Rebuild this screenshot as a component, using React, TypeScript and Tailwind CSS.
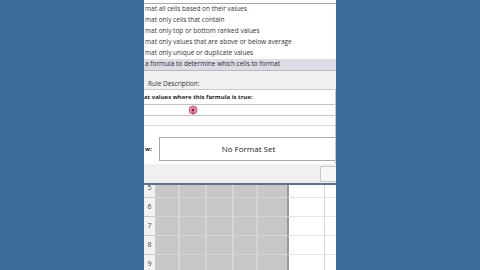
import React from "react";

// only the part of each line that shows inside the cropped dialog
const rules = [
  "mat all cells based on their values",
  "mat only cells that contain",
  "mat only top or bottom ranked values",
  "mat only values that are above or below average",
  "mat only unique or duplicate values",
];

const rows = ["5", "6", "7", "8", "9"];

export default function App() {
  return (
    <div className="flex h-[270px] w-[480px] overflow-hidden bg-[#3b6d9a] font-['Open_Sans',sans-serif]">
      <div className="w-[144px] shrink-0" />

      {/* Dialog + sheet */}
      <div className="flex w-[192px] shrink-0 flex-col overflow-hidden bg-[#f0f0f0]">
        {/* rule type list */}
        <div className="border-b border-[#b9b9b9] bg-white pt-[3px]">
          <div className="h-[1px] bg-[#a9a9a9]" />
          {rules.map((r) => (
            <div key={r} className="flex h-[11px] items-center whitespace-nowrap pl-[1px] text-[6.5px] leading-none text-[#333]">
              {r}
            </div>
          ))}
          <div className="flex h-[11px] items-center whitespace-nowrap bg-[#dddce6] pl-[1px] text-[6.5px] leading-none text-[#2a2a2a]">
            a formula to determine which cells to format
          </div>
        </div>

        {/* edit rule description */}
        <div className="flex h-[18px] items-end whitespace-nowrap pb-[2px] pl-[4px] text-[6.5px] leading-none text-[#333]">
          Rule Description:
        </div>

        <div className="flex flex-col border-r border-t border-[#c9c9c9] bg-white">
          <div className="flex h-[14px] items-center whitespace-nowrap text-[6px] font-bold leading-none text-[#1e1e1e]">
            at values where this formula is true:
          </div>
          <div className="relative h-[12px] border-y border-[#c4c4c4]">
            <svg className="absolute left-[44px] top-[0px]" width="10" height="10" viewBox="0 0 10 10">
              <circle cx="5" cy="5" r="4" fill="#e58aa9" stroke="#b0506f" strokeWidth="0.8" />
              <circle cx="5" cy="5" r="1.3" fill="#7a2a44" />
              <rect x="4.6" y="6.5" width="0.8" height="3" fill="#7a2a44" />
            </svg>
          </div>
          <div className="h-[10px] border-b border-[#dcdcdc]" />
          <div className="h-[11px]" />
          <div className="flex h-[24px] items-center">
            <div className="flex w-[15px] shrink-0 items-center whitespace-nowrap pl-[1px] text-[6px] font-bold leading-none text-[#1e1e1e]">
              w:
            </div>
            <div className="flex h-[24px] flex-1 items-center justify-center border border-r-0 border-[#a8a8a8] bg-white pl-[2px] text-[8px] text-[#222]">
              No Format Set
            </div>
          </div>
          <div className="h-[3px]" />
        </div>

        {/* buttons strip */}
        <div className="flex h-[19px] items-end justify-end pb-[1px]">
          <div className="h-[16px] w-[16px] rounded-l-[2px] border border-r-0 border-[#c8c8c8] bg-[#f7f7f7]" />
        </div>

        {/* worksheet */}
        <div className="flex flex-1 flex-col overflow-hidden border-t-2 border-[#5f7285] bg-white">
          <div className="-mt-[6px] flex flex-col">
            {rows.map((n) => (
              <div key={n} className="flex h-[19px] shrink-0">
                <div className="flex w-[12px] items-center justify-center border-b border-r border-[#c9c9c9] bg-[#f2f2f2] text-[7px] text-[#444]">
                  {n}
                </div>
                <div className="flex flex-1 border-b border-[#d5d5d5] bg-[#c7c7c7]">
                  <div className="w-[24px] border-r-2 border-[#d6d6d6]" />
                  <div className="w-[27px] border-r-2 border-[#d3d3d3]" />
                  <div className="w-[27px] border-r-2 border-[#d6d6d6]" />
                  <div className="w-[24px] border-r-2 border-[#d3d3d3]" />
                  <div className="flex-1 border-r-2 border-[#9a9a9a]" />
                </div>
                <div className="flex w-[47px] border-b border-[#e4e4e4]">
                  <div className="w-[36px] border-r border-[#d8d8d8]" />
                  <div className="flex-1" />
                </div>
              </div>
            ))}
          </div>
        </div>
      </div>

      <div className="flex-1" />
    </div>
  );
}
